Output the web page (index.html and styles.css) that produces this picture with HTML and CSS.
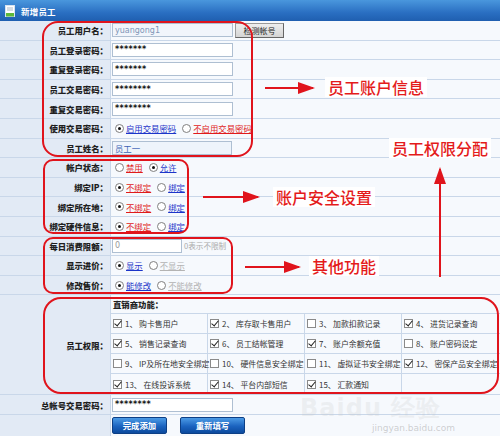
FILE: index.html
```html
<!DOCTYPE html>
<html lang="zh">
<head>
<meta charset="utf-8">
<title>新增员工</title>
<link rel="stylesheet" href="styles.css">
</head>
<body>
<div class="page">
  <div class="titlebar">
    <svg class="doc" width="10" height="12" viewBox="0 0 10 12"><rect x="0.5" y="0.5" width="9" height="11" fill="#fff" stroke="#d8e4f0"/><rect x="1" y="8" width="8" height="3.5" fill="#5cb83a"/><line x1="2" y1="3" x2="8" y2="3" stroke="#9ab" stroke-width="0.8"/><line x1="2" y1="5" x2="8" y2="5" stroke="#9ab" stroke-width="0.8"/></svg>
    <span class="title">新增员工</span>
  </div>
  <div class="form">
    <div class="row"><div class="lbl">员工用户名：</div><div class="val"><span class="txt ro">yuangong1</span><span class="btn-gray">检测帐号</span></div></div>
    <div class="row"><div class="lbl">员工登录密码：</div><div class="val"><span class="txt pw">*******</span></div></div>
    <div class="row"><div class="lbl">重复登录密码：</div><div class="val"><span class="txt pw">*******</span></div></div>
    <div class="row"><div class="lbl">员工交易密码：</div><div class="val"><span class="txt pw">********</span></div></div>
    <div class="row"><div class="lbl">重复交易密码：</div><div class="val"><span class="txt pw">********</span></div></div>
    <div class="row"><div class="lbl">使用交易密码：</div><div class="val"><span class="rd on"></span><a class="lk blue">启用交易密码</a><span class="rd"></span><a class="lk red">不启用交易密码</a></div></div>
    <div class="row"><div class="lbl">员工姓名：</div><div class="val"><span class="txt name">员工一</span></div></div>
    <div class="row"><div class="lbl">帐户状态：</div><div class="val"><span class="rd"></span><a class="lk red">禁用</a><span class="rd on"></span><a class="lk blue">允许</a></div></div>
    <div class="row"><div class="lbl">绑定IP：</div><div class="val"><span class="rd on"></span><a class="lk red">不绑定</a><span class="rd"></span><a class="lk blue">绑定</a></div></div>
    <div class="row"><div class="lbl">绑定所在地：</div><div class="val"><span class="rd on"></span><a class="lk red">不绑定</a><span class="rd"></span><a class="lk blue">绑定</a></div></div>
    <div class="row"><div class="lbl">绑定硬件信息：</div><div class="val"><span class="rd on"></span><a class="lk red">不绑定</a><span class="rd"></span><a class="lk blue">绑定</a></div></div>
    <div class="row"><div class="lbl">每日消费限额：</div><div class="val"><span class="txt short">0</span><span class="hint">0表示不限制</span></div></div>
    <div class="row"><div class="lbl">显示进价：</div><div class="val"><span class="rd on"></span><a class="lk blue">显示</a><span class="rd"></span><a class="lk gray">不显示</a></div></div>
    <div class="row"><div class="lbl">修改售价：</div><div class="val"><span class="rd on"></span><a class="lk blue">能修改</a><span class="rd"></span><a class="lk gray">不能修改</a></div></div>
    <div class="row perm-row"><div class="lbl">员工权限：</div>
      <div class="val perm">
        <div class="perm-head">直销商功能：</div>
        <div class="perm-grid">
          <div class="cell"><span class="cb on"></span>1、 购卡售用户</div>
          <div class="cell"><span class="cb on"></span>2、 库存取卡售用户</div>
          <div class="cell"><span class="cb"></span>3、 加款扣款记录</div>
          <div class="cell"><span class="cb on"></span>4、 进货记录查询</div>
          <div class="cell"><span class="cb on"></span>5、 销售记录查询</div>
          <div class="cell"><span class="cb on"></span>6、 员工结帐管理</div>
          <div class="cell"><span class="cb on"></span>7、 账户余额充值</div>
          <div class="cell"><span class="cb"></span>8、 账户密码设定</div>
          <div class="cell"><span class="cb"></span>9、 IP及所在地安全绑定</div>
          <div class="cell"><span class="cb"></span>10、 硬件信息安全绑定</div>
          <div class="cell"><span class="cb"></span>11、 虚拟证书安全绑定</div>
          <div class="cell"><span class="cb on"></span>12、 密保产品安全绑定</div>
          <div class="cell"><span class="cb on"></span>13、 在线投诉系统</div>
          <div class="cell"><span class="cb on"></span>14、 平台内部短信</div>
          <div class="cell"><span class="cb on"></span>15、 汇款通知</div>
          <div class="cell"></div>
        </div>
      </div>
    </div>
    <div class="row"><div class="lbl">总帐号交易密码：</div><div class="val"><span class="txt pw">********</span></div></div>
    <div class="row btn-row"><div class="lbl"></div><div class="val"><span class="btn-blue">完成添加</span><span class="btn-blue wide">重新填写</span></div></div>
  </div>

  <div class="box box1"></div>
  <div class="box box2"></div>
  <div class="box box3"></div>
  <div class="box box4"></div>

  <div class="arrow-h a1"></div>
  <div class="arrow-h a2"></div>
  <div class="arrow-h a3"></div>
  <div class="arrow-v a4"></div>

  <div class="note n1">员工账户信息</div>
  <div class="note n2">员工权限分配</div>
  <div class="note n3">账户安全设置</div>
  <div class="note n4">其他功能</div>

  <div class="wm">Bai<span class="wm-du">du</span> 经验</div>
  <div class="wm-url">jingyan.baidu.com</div>
</div>
</body>
</html>
```

FILE: styles.css
```css
* { box-sizing: border-box; }
html, body { margin: 0; padding: 0; background: #fff; }
body { font-family: "Noto Sans CJK SC", "Noto Sans", sans-serif; }

.page {
  position: relative;
  width: 500px;
  height: 436px;
  overflow: hidden;
  background: #f6f9fd;
}

.titlebar {
  height: 21px;
  display: flex;
  align-items: center;
  gap: 6px;
  padding-left: 5px;
  background: linear-gradient(#4a97dd, #2a6fc2 60%, #1f5fb0);
}
.title {
  color: #fff;
  font-weight: bold;
  font-size: 8.5px;
  letter-spacing: 0.2px;
}

.form { display: flex; flex-direction: column; }
.row {
  display: flex;
  height: 19.6px;
  border-bottom: 1px solid #c9d7e9;
}
.lbl {
  width: 111px;
  flex: none;
  background: #e2eaf5;
  border-right: 1px solid #c9d7e9;
  display: flex;
  align-items: center;
  justify-content: flex-end;
  padding-right: 2px;
  font-size: 8.4px;
  font-weight: 900;
  color: #1f1f1f;
}
.val {
  flex: 1;
  display: flex;
  align-items: center;
  padding-left: 1px;
  font-size: 8.4px;
  color: #333;
}

.txt {
  width: 121px;
  height: 14px;
  border: 1px solid #aebfd2;
  background: #fff;
  display: flex;
  align-items: center;
  padding-left: 2px;
  font-family: "DejaVu Sans", sans-serif;
  font-size: 8px;
}
.txt.ro { color: #7f95b8; background: #f1f5fb; }
.txt.pw { font-weight: bold; color: #111; letter-spacing: 0.3px; }
.txt.name { background: #eef4fb; color: #3a62b4; font-family: "Noto Sans CJK SC", sans-serif; font-size: 8.4px; width: 120px; }
.txt.short { width: 70px; color: #999; }
.hint { margin-left: 2px; color: #aaa; font-size: 7.6px; }

.btn-gray {
  margin-left: 2px;
  width: 49px;
  height: 15px;
  border: 1px solid #999;
  border-right-color: #666;
  border-bottom-color: #666;
  background: linear-gradient(#eee, #d4d4d4);
  font-size: 8px;
  color: #222;
  display: flex;
  align-items: center;
  justify-content: center;
}

.rd {
  width: 9px;
  height: 9px;
  border-radius: 50%;
  border: 1px solid #808080;
  background: #fff;
  margin: 0 2px 0 3px;
  flex: none;
  position: relative;
}
.rd.on::after {
  content: "";
  position: absolute;
  left: 2px; top: 2px;
  width: 3px; height: 3px;
  border-radius: 50%;
  background: #111;
}
.lk { text-decoration: underline; margin-right: 3px; }
.lk.blue { color: #1c35c9; }
.lk.red { color: #e01b1b; }
.lk.gray { color: #b3b3b3; }

/* permissions */
.row.perm-row { height: 100px; }
.perm { flex-direction: column; align-items: stretch; padding-left: 0; }
.perm-head {
  height: 20px;
  border-bottom: 1px solid #c9d7e9;
  display: flex;
  align-items: center;
  padding-left: 2px;
  font-weight: 900;
  font-size: 8.4px;
  color: #1f1f1f;
}
.perm-grid {
  flex: 1;
  display: grid;
  grid-template-columns: 97px 97px 97px 1fr;
  grid-auto-rows: 20px;
}
.cell {
  display: flex;
  align-items: center;
  padding-left: 2px;
  font-size: 7.9px;
  color: #333;
  white-space: nowrap;
  border-right: 1px solid #c9d7e9;
  border-bottom: 1px solid #c9d7e9;
}
.cell:nth-child(4n) { border-right: none; }
.cell:nth-last-child(-n+4) { border-bottom: none; }
.cb {
  width: 9px;
  height: 9px;
  border: 1px solid #8a8a8a;
  background: #fff;
  margin-right: 3px;
  flex: none;
  position: relative;
}
.cb.on::after {
  content: "";
  position: absolute;
  left: 2px; top: -1px;
  width: 3px; height: 6px;
  border: solid #222;
  border-width: 0 1.6px 1.6px 0;
  transform: rotate(40deg);
}

.row.btn-row { height: 21px; border-bottom: none; }
.btn-row .val { gap: 13px; padding-left: 1px; }
.btn-blue {
  width: 55px;
  height: 17px;
  border: 1px solid #0d3f85;
  border-radius: 2px;
  background: linear-gradient(#4c9be6, #1b63bf 55%, #0c4a9e);
  color: #fff;
  font-weight: bold;
  font-size: 8.4px;
  display: flex;
  align-items: center;
  justify-content: center;
}
.btn-blue.wide { width: 65px; }

/* annotation overlays */
.box {
  position: absolute;
  border: 2px solid #e0141c;
}
.box1 { left: 42px; top: 21px; width: 211px; height: 136px; border-radius: 16px; }
.box2 { left: 43px; top: 159px; width: 146px; height: 75px; border-radius: 10px; }
.box3 { left: 43px; top: 237px; width: 190px; height: 57px; border-radius: 10px; }
.box4 { left: 43px; top: 297px; width: 456px; height: 97px; border-radius: 18px; }

.arrow-h {
  position: absolute;
  height: 2px;
  background: #e0141c;
}
.arrow-h::after {
  content: "";
  position: absolute;
  right: -2px;
  top: -5px;
  border-left: 17px solid #e0141c;
  border-top: 6px solid transparent;
  border-bottom: 6px solid transparent;
}
.a1 { left: 265px; top: 87px; width: 48px; }
.a2 { left: 203px; top: 196px; width: 55px; }
.a3 { left: 245px; top: 266px; width: 54px; }
.arrow-v {
  position: absolute;
  width: 2px;
  background: #e0141c;
}
.arrow-v::after {
  content: "";
  position: absolute;
  top: -2px;
  left: -5px;
  border-bottom: 17px solid #e0141c;
  border-left: 6px solid transparent;
  border-right: 6px solid transparent;
}
.a4 { left: 439px; top: 169px; height: 108px; }

.note {
  position: absolute;
  color: #e41b1b;
  font-size: 16px;
  font-weight: 500;
  line-height: 20px;
  background: #fff;
  padding: 0 3px;
  white-space: nowrap;
}
.n1 { left: 325px; top: 77px; }
.n2 { left: 389px; top: 138px; }
.n3 { left: 273px; top: 187px; }
.n4 { left: 309px; top: 256px; }

.wm {
  position: absolute;
  left: 300px;
  top: 392px;
  font-family: "DejaVu Sans", sans-serif;
  font-weight: bold;
  font-size: 24px;
  color: rgba(200, 200, 200, 0.22);
  white-space: nowrap;
  letter-spacing: 1px;
}
.wm-du { color: rgba(200, 200, 200, 0.22); }
.wm-url {
  position: absolute;
  left: 372px;
  top: 423px;
  font-family: "DejaVu Sans", sans-serif;
  font-size: 9px;
  color: rgba(150, 150, 150, 0.45);
}
```
